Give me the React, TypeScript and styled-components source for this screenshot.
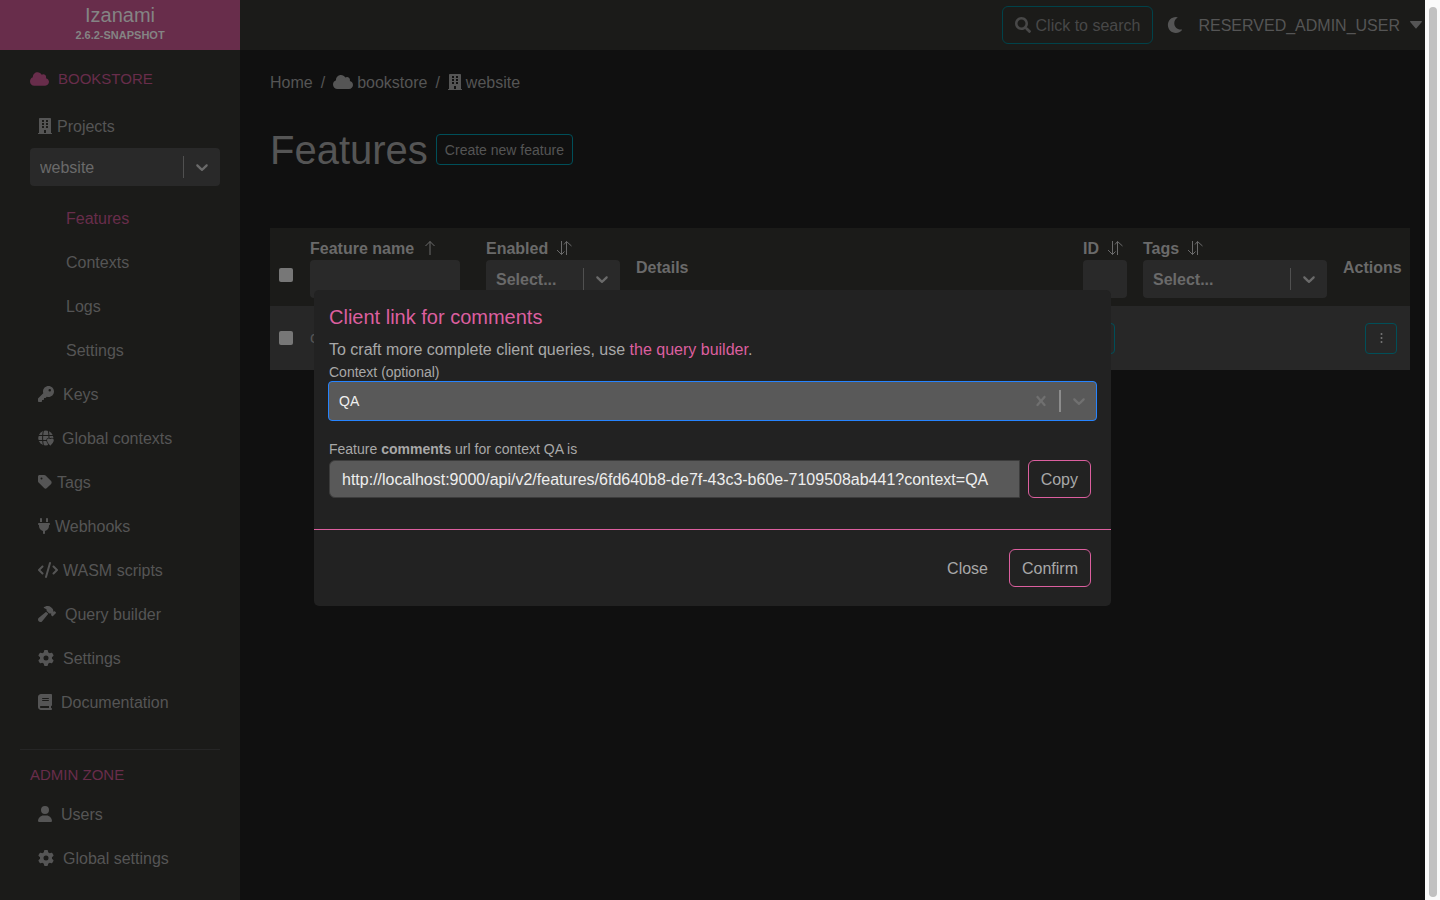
import React from "react";
import styled, { createGlobalStyle, css } from "styled-components";
import { FaBuilding, FaMoon, FaSearch } from "react-icons/fa";
import {
  FaCloud,
  FaKey,
  FaTag,
  FaPlug,
  FaCode,
  FaHammer,
  FaGear,
  FaBook,
  FaUser,
} from "react-icons/fa6";

const color = {
  page: "#101010",
  panel: "#1b1b19",
  row: "#272727",
  field: "#292929",
  brand: "#682d4b",
  pink: "#dc5f9f",
  teal: "#00424a",
  muted: "#555555",
  strong: "#6a6a6a",
  dialog: "#222222",
  dialogText: "#a8a8a8",
  input: "#595959",
};

const GlobalStyle = createGlobalStyle`
  *, *::before, *::after { box-sizing: border-box; }
  body {
    margin: 0;
    background: ${color.page};
    color: ${color.muted};
    font: 16px/24px "Liberation Sans", Arial, sans-serif;
    overflow: hidden;
  }
  a { color: inherit; text-decoration: none; }
  button, input { font: inherit; color: inherit; }
  h1, h2, h3, p, ul, ol { margin: 0; padding: 0; font-weight: 400; }
  ul, ol { list-style: none; }
  svg { display: block; flex: none; }
`;

const Window = styled.div`
  display: flex;
  height: 100vh;
`;

const Page = styled.div`
  flex: 1;
  min-width: 0;
  display: grid;
  grid-template-columns: 240px 1fr;
  grid-template-rows: 50px 1fr;
`;

const ScrollTrack = styled.div`
  width: 15px;
  padding: 7px 3px 3px 4px;
  background: #fafafa;
`;

const ScrollThumb = styled.div`
  height: 100%;
  border-radius: 4px;
  background: #c1c1c1;
`;

const Glyph = styled.span<{ $width?: number }>`
  display: flex;
  flex: none;
  svg {
    width: ${(p) => p.$width ?? 16}px;
    height: 16px;
  }
`;

const Text = styled.span`
  display: block;
  padding-top: 2px;
`;

const Brand = styled.a`
  display: flex;
  flex-direction: column;
  align-items: center;
  gap: 1px;
  padding-top: 3px;
  background: ${color.brand};
  color: #848484;
  font-size: 20px;
`;

const Version = styled.span`
  font-size: 11px;
  line-height: 14px;
  font-weight: 700;
`;

const TopBar = styled.header`
  display: flex;
  justify-content: flex-end;
  align-items: center;
  padding-right: 3px;
  background: ${color.panel};
`;

const SearchButton = styled.button`
  display: flex;
  align-items: center;
  gap: 5px;
  height: 38px;
  padding: 0 12px;
  border: 1px solid ${color.teal};
  border-radius: 6px;
  background: transparent;
  color: #484848;
`;

const IconButton = styled.button`
  display: flex;
  margin: 0 15px 0 14px;
  padding: 0;
  border: 0;
  background: none;
`;

const UserMenu = styled.button`
  display: flex;
  align-items: center;
  gap: 10px;
  padding: 0;
  border: 0;
  background: none;
`;

const Sidebar = styled.nav`
  padding: 16px 20px 0;
  background: ${color.panel};
`;

const SideTitle = styled.h3`
  display: flex;
  align-items: center;
  gap: 9px;
  height: 26px;
  padding-left: 10px;
  color: ${color.brand};
  font-size: 15px;
`;

const NavLink = styled.a<{ $gap?: number; $nested?: boolean; $active?: boolean }>`
  display: flex;
  align-items: center;
  gap: ${(p) => p.$gap ?? 8}px;
  height: 44px;
  padding-left: ${(p) => (p.$nested ? 46 : 18)}px;
  ${(p) => p.$active && css`color: ${color.brand};`}
`;

const ProjectsBlock = styled.div`
  padding: 12px 0 10px;
`;

const ProjectSelect = styled.div`
  padding-left: 10px;
`;

const SelectInput = styled.input`
  flex: 1;
  min-width: 0;
  padding: 2px 0 0;
  border: 0;
  outline: 0;
  background: none;
  &::placeholder { color: inherit; opacity: 1; }
`;

const SelectShell = styled.div<{ $focused?: boolean }>`
  display: flex;
  align-items: center;
  height: 38px;
  padding: 0 8px 0 10px;
  border-radius: 4px;
  background: ${color.field};
  color: ${color.strong};
  ${(p) =>
    p.$focused &&
    css`
      height: 40px;
      margin: 0 -1px;
      padding-right: 7px;
      border: 1px solid #2684ff;
      background: ${color.input};
      color: #f0f0f0;
      font-size: 14px;
      ${SelectInput} { padding-top: 0; }
    `}
`;

const Separator = styled.span<{ $light?: boolean }>`
  width: ${(p) => (p.$light ? 2 : 1)}px;
  height: 22px;
  margin: 0 8px;
  background: ${(p) => (p.$light ? "#8c8c8c" : "#505050")};
`;

const Divider = styled.hr`
  margin: 25px 0 12px;
  border: 0;
  border-top: 1px solid #262626;
`;

const AdminLinks = styled.div`
  padding-top: 4px;
`;

const Main = styled.main`
  padding: 20px 15px 0 30px;
`;

const Crumbs = styled.ol`
  display: flex;
  align-items: center;
  gap: 8px;
  li { display: flex; align-items: center; gap: 8px; height: 24px; }
  li + li::before { content: "/"; padding-top: 2px; }
  a { display: flex; align-items: center; gap: 4px; }
`;

const Heading = styled.div`
  display: flex;
  align-items: center;
  gap: 8px;
  margin: 30px 0 54px;
  h1 { padding-top: 2px; font-size: 40px; line-height: 48px; }
`;

const SmallButton = styled.button`
  display: flex;
  align-items: center;
  justify-content: center;
  height: 31px;
  min-width: 32px;
  padding: 0 8px;
  border: 1px solid #004f59;
  border-radius: 4px;
  background: transparent;
  font-size: 14px;
`;

const Table = styled.table`
  width: 100%;
  table-layout: fixed;
  border-collapse: collapse;
  th, td { padding: 0 8px; text-align: left; }
  th { height: 78px; background: ${color.panel}; color: ${color.strong}; }
  td { height: 64px; background: ${color.row}; }
  th input { font-weight: 700; }
`;

const SortLabel = styled.div`
  display: flex;
  align-items: center;
  gap: 8px;
  height: 24px;
`;

const FilterInput = styled.input`
  display: block;
  width: 100%;
  max-width: 150px;
  height: 38px;
  border: 0;
  border-radius: 4px;
  background: ${color.field};
`;

const Check = styled.input`
  appearance: none;
  display: block;
  width: 14px;
  height: 14px;
  margin: 16px 0 0 1px;
  border-radius: 2px;
  background: #777777;
  td & { margin-top: 0; }
`;

const RowActions = styled.div`
  display: flex;
  justify-content: flex-end;
  padding-right: 5px;
`;

const Dialog = styled.section`
  position: fixed;
  top: 290px;
  left: calc(50% - 406px);
  width: 797px;
  border-radius: 5px;
  background: ${color.dialog};
  color: ${color.dialogText};
`;

const DialogBody = styled.div`
  padding: 15px 15px 31px;
  h2 { color: ${color.pink}; font-size: 20px; }
  p { margin-top: 9px; }
  p a { color: ${color.pink}; }
`;

const FieldLabel = styled.label`
  display: block;
  margin-top: 1px;
  font-size: 14px;
  line-height: 18px;
  div + & { margin-top: 19px; }
`;

const UrlRow = styled.div`
  display: flex;
  gap: 8px;
  margin: 2px 5px 0 0;
`;

const UrlInput = styled.input`
  flex: 1;
  min-width: 0;
  height: 38px;
  padding: 2px 12px 0;
  border: 1px solid #3c3c3c;
  border-radius: 6px 0 0 6px;
  background: ${color.input};
  color: #eeeeee;
`;

const Button = styled.button<{ $plain?: boolean }>`
  height: 38px;
  padding: 2px 12px 0;
  border: 1px solid ${(p) => (p.$plain ? "transparent" : color.pink)};
  border-radius: 6px;
  background: transparent;
`;

const DialogFooter = styled.footer`
  display: flex;
  justify-content: flex-end;
  gap: 8px;
  padding: 19px 20px;
  border-top: 1px solid ${color.pink};
`;

const Chevron = ({ tint = "currentColor" }: { tint?: string }) => (
  <svg width="20" height="20" viewBox="0 0 20 20" fill={tint} aria-hidden="true">
    <path d="M4.516 7.548c0.436-0.446 1.043-0.481 1.576 0l3.908 3.747 3.908-3.747c0.533-0.481 1.141-0.446 1.574 0 0.436 0.445 0.408 1.197 0 1.615-0.406 0.418-4.695 4.502-4.695 4.502-0.217 0.223-0.502 0.335-0.787 0.335s-0.57-0.112-0.789-0.335c0 0-4.287-4.084-4.695-4.502s-0.436-1.17 0-1.615z" />
  </svg>
);

const Cross = () => (
  <svg width="20" height="20" viewBox="0 0 20 20" fill="#707070" aria-hidden="true">
    <path d="M14.348 14.849c-0.469 0.469-1.229 0.469-1.697 0l-2.651-3.030-2.651 3.029c-0.469 0.469-1.229 0.469-1.697 0-0.469-0.469-0.469-1.229 0-1.697l2.758-3.15-2.759-3.152c-0.469-0.469-0.469-1.228 0-1.697s1.228-0.469 1.697 0l2.652 3.031 2.651-3.031c0.469-0.469 1.228-0.469 1.697 0s0.469 1.229 0 1.697l-2.758 3.152 2.758 3.15c0.469 0.469 0.469 1.229 0 1.698z" />
  </svg>
);

const SortIcon = ({ single }: { single?: boolean }) => (
  <svg width="18" height="16" viewBox="0 0 18 16" fill="none" stroke="currentColor" aria-hidden="true">
    {single ? (
      <path d="M8 15V1.500M3.500 6L8 1.500 12.500 6" />
    ) : (
      <path d="M5.500 1v13.500M1 10l4.500 4.500L8.500 11.500M10.500 15V1.500M8 4.500l2.500-3L15.500 6" />
    )}
  </svg>
);

const GlobePin = () => (
  <svg width="16" height="16" viewBox="0 0 16 16" aria-hidden="true">
    <circle cx="7.800" cy="8" r="7.600" fill="currentColor" />
    <path
      d="M0 5.500h16M0 10.500h16M5.500 0C4.300 5 4.300 11 5.500 16M10.200 0C11.300 5 11.300 11 10.200 16"
      fill="none"
      stroke={color.panel}
    />
    <path
      d="M12.300 15.800C10.500 13.800 9 12 9 10.300c0-1.600 1.900-2.300 3.300-1.200 1.400-1.100 3.500-.4 3.500 1.200 0 1.700-1.700 3.500-3.500 5.500z"
      fill="currentColor"
      stroke={color.panel}
      strokeWidth="1.500"
      paintOrder="stroke"
    />
  </svg>
);

const Caret = () => (
  <svg width="12" height="8" viewBox="0 0 12 8" fill="currentColor" aria-hidden="true">
    <path d="M.6 0h10.800c.5 0 .8.600.4 1L6.500 7.200c-.3.300-.7.300-1 0L.2 1C-.2.600.1 0 .6 0z" />
  </svg>
);

const Dots = () => (
  <svg width="3" height="12" viewBox="0 0 3 12" fill="#777777" aria-hidden="true">
    <circle cx="1.500" cy="2" r="1" />
    <circle cx="1.500" cy="6" r="1" />
    <circle cx="1.500" cy="10" r="1" />
  </svg>
);

const FilterSelect = ({ label }: { label: string }) => (
  <SelectShell>
    <SelectInput aria-label={label} placeholder="Select..." size={1} />
    <Separator />
    <Chevron />
  </SelectShell>
);

const projectLinks = ["Features", "Contexts", "Logs", "Settings"];

type LinkItem = { icon: React.ReactNode; label: string; gap: number; width?: number };

const tenantLinks: LinkItem[] = [
  { icon: <FaKey />, label: "Keys", gap: 9 },
  { icon: <GlobePin />, label: "Global contexts", gap: 8 },
  { icon: <FaTag />, label: "Tags", gap: 5, width: 14 },
  { icon: <FaPlug />, label: "Webhooks", gap: 5, width: 12 },
  { icon: <FaCode />, label: "WASM scripts", gap: 5, width: 20 },
  { icon: <FaHammer />, label: "Query builder", gap: 9, width: 18 },
  { icon: <FaGear />, label: "Settings", gap: 9 },
  { icon: <FaBook />, label: "Documentation", gap: 9, width: 14 },
];

const adminLinks: LinkItem[] = [
  { icon: <FaUser />, label: "Users", gap: 9, width: 14 },
  { icon: <FaGear />, label: "Global settings", gap: 9 },
];

const IconLink = ({ icon, label, gap, width }: LinkItem) => (
  <NavLink href="#" $gap={gap}>
    <Glyph $width={width}>{icon}</Glyph>
    <Text>{label}</Text>
  </NavLink>
);

export default function App() {
  return (
    <Window>
      <GlobalStyle />
      <Page>
        <Brand href="#">
          Izanami
          <Version>2.6.2-SNAPSHOT</Version>
        </Brand>
        <TopBar>
          <SearchButton type="button">
            <Glyph><FaSearch /></Glyph>
            <Text>Click to search</Text>
          </SearchButton>
          <IconButton type="button" aria-label="Toggle theme">
            <Glyph><FaMoon /></Glyph>
          </IconButton>
          <UserMenu type="button">
            <Text>RESERVED_ADMIN_USER</Text>
            <Caret />
          </UserMenu>
        </TopBar>

        <Sidebar>
          <SideTitle>
            <Glyph $width={19}><FaCloud /></Glyph>
            BOOKSTORE
          </SideTitle>
          <ProjectsBlock>
            <IconLink icon={<FaBuilding />} label="Projects" gap={5} width={14} />
            <ProjectSelect>
              <SelectShell>
                <SelectInput aria-label="Project" defaultValue="website" />
                <Separator />
                <Chevron />
              </SelectShell>
            </ProjectSelect>
          </ProjectsBlock>
          {projectLinks.map((label) => (
            <NavLink href="#" key={label} $nested $active={label === "Features"}>
              <Text>{label}</Text>
            </NavLink>
          ))}
          {tenantLinks.map((link) => (
            <IconLink key={link.label} {...link} />
          ))}
          <Divider />
          <SideTitle>ADMIN ZONE</SideTitle>
          <AdminLinks>
            {adminLinks.map((link) => (
              <IconLink key={link.label} {...link} />
            ))}
          </AdminLinks>
        </Sidebar>

        <Main>
          <Crumbs>
            <li><a href="#"><Text>Home</Text></a></li>
            <li><a href="#"><Glyph $width={20}><FaCloud /></Glyph><Text>bookstore</Text></a></li>
            <li><a href="#"><Glyph $width={14}><FaBuilding /></Glyph><Text>website</Text></a></li>
          </Crumbs>
          <Heading>
            <h1>Features</h1>
            <SmallButton type="button"><Text>Create new feature</Text></SmallButton>
          </Heading>
          <Table>
            <colgroup>
              <col style={{ width: 32 }} />
              <col style={{ width: 176 }} />
              <col style={{ width: 150 }} />
              <col />
              <col style={{ width: 60 }} />
              <col style={{ width: 200 }} />
              <col style={{ width: 75 }} />
            </colgroup>
            <thead>
              <tr>
                <th><Check type="checkbox" aria-label="Select all features" /></th>
                <th>
                  <SortLabel><Text>Feature name</Text><SortIcon single /></SortLabel>
                  <FilterInput aria-label="Filter by name" />
                </th>
                <th>
                  <SortLabel><Text>Enabled</Text><SortIcon /></SortLabel>
                  <FilterSelect label="Filter by status" />
                </th>
                <th><Text>Details</Text></th>
                <th>
                  <SortLabel><Text>ID</Text><SortIcon /></SortLabel>
                  <FilterInput aria-label="Filter by ID" />
                </th>
                <th>
                  <SortLabel><Text>Tags</Text><SortIcon /></SortLabel>
                  <FilterSelect label="Filter by tag" />
                </th>
                <th><Text>Actions</Text></th>
              </tr>
            </thead>
            <tbody>
              <tr>
                <td><Check type="checkbox" aria-label="Select comments" /></td>
                <td>comments</td>
                <td />
                <td />
                <td><SmallButton type="button" aria-label="Copy link" /></td>
                <td />
                <td>
                  <RowActions>
                    <SmallButton type="button" aria-label="Actions"><Dots /></SmallButton>
                  </RowActions>
                </td>
              </tr>
            </tbody>
          </Table>
        </Main>
      </Page>

      <ScrollTrack><ScrollThumb /></ScrollTrack>

      <Dialog role="dialog" aria-labelledby="dialog-title">
        <DialogBody>
          <h2 id="dialog-title">Client link for comments</h2>
          <p>To craft more complete client queries, use <a href="#">the query builder</a>.</p>
          <FieldLabel htmlFor="context">Context (optional)</FieldLabel>
          <SelectShell $focused>
            <SelectInput id="context" defaultValue="QA" />
            <Cross />
            <Separator $light />
            <Chevron tint="#707070" />
          </SelectShell>
          <FieldLabel htmlFor="url">Feature <b>comments</b> url for context QA is</FieldLabel>
          <UrlRow>
            <UrlInput
              id="url"
              readOnly
              value="http://localhost:9000/api/v2/features/6fd640b8-de7f-43c3-b60e-7109508ab441?context=QA"
            />
            <Button type="button">Copy</Button>
          </UrlRow>
        </DialogBody>
        <DialogFooter>
          <Button type="button" $plain>Close</Button>
          <Button type="button">Confirm</Button>
        </DialogFooter>
      </Dialog>
    </Window>
  );
}
